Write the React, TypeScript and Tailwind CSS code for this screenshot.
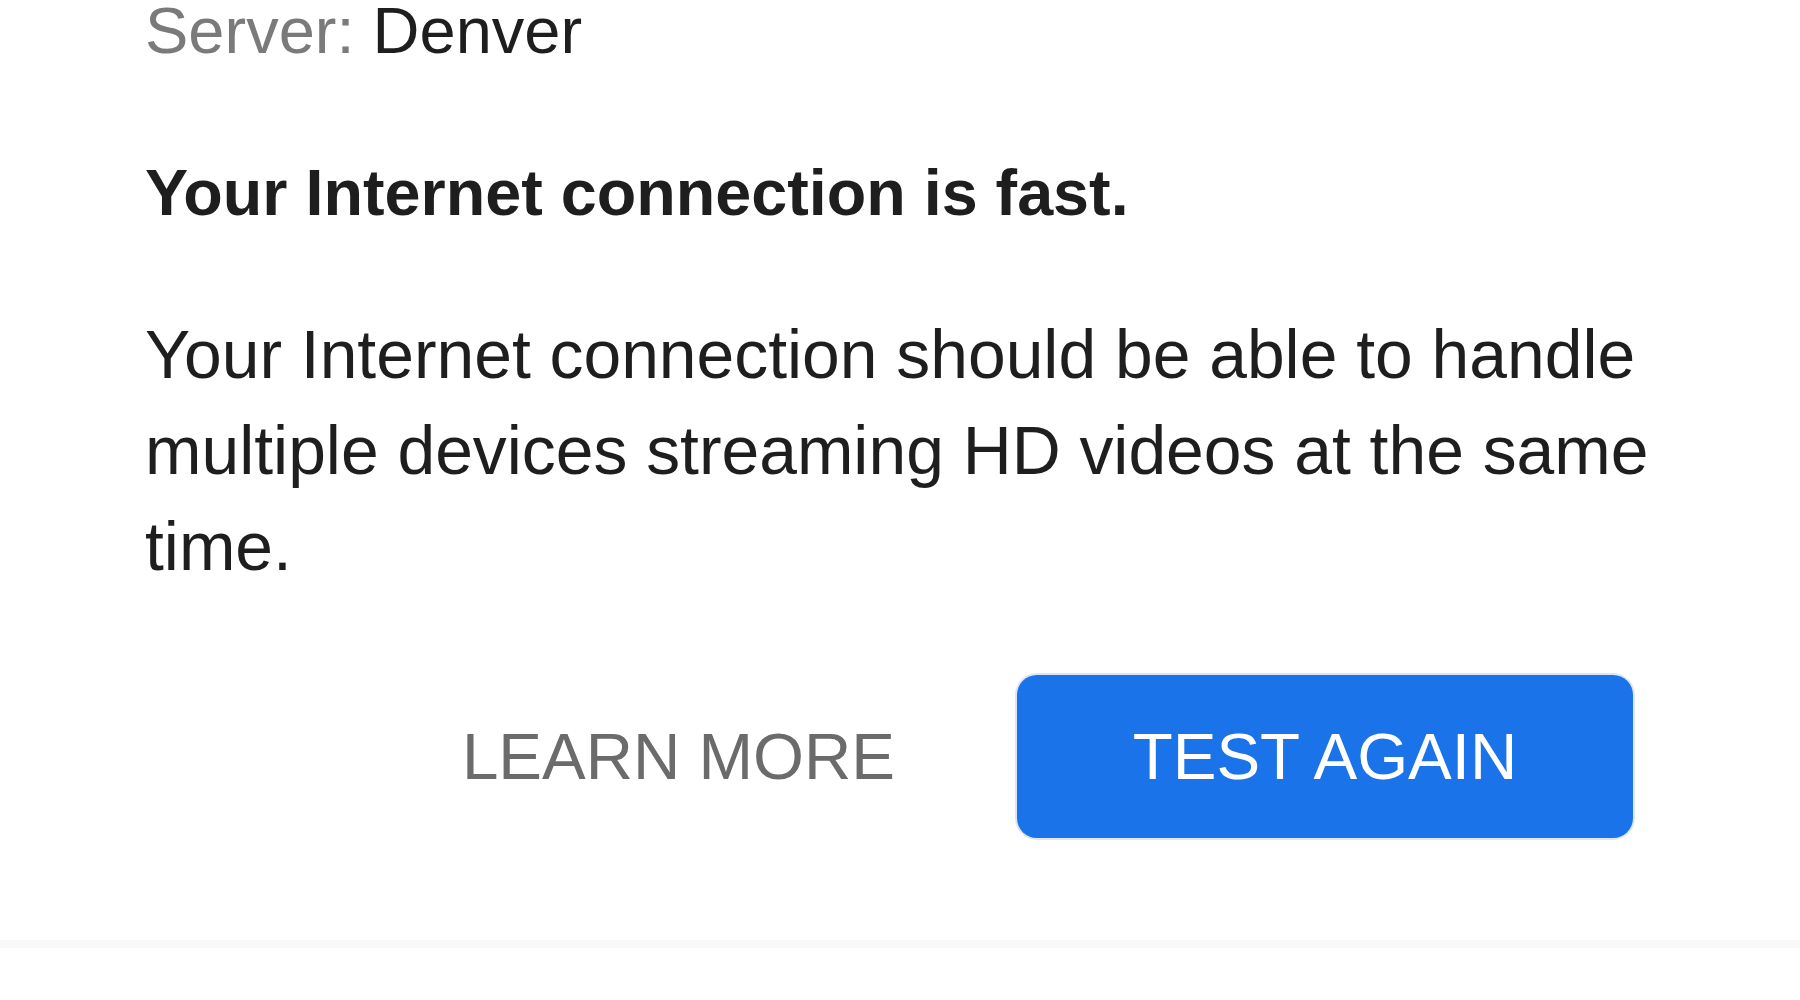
import React from "react";

export default function App() {
  return (
    <div
      className="w-[1800px] h-[1000px] bg-white overflow-hidden flex flex-col"
      style={{ fontFamily: '"Liberation Sans", Arial, Helvetica, sans-serif' }}
    >
      <div className="px-[145px] flex flex-col">
        <div className="text-[65px] leading-[62px] whitespace-nowrap">
          <span className="text-[#7a7a7a] font-light">Server:</span>{" "}
          <span className="text-[#1e1e1e]">Denver</span>
        </div>
        <h1 className="mt-[99px] text-[64.7px] leading-[64px] font-bold text-[#1e1e1e]">
          Your Internet connection is fast.
        </h1>
        <p className="mt-[82px] text-[67.8px] leading-[96px] text-[#1e1e1e]">
          Your Internet connection should be able to handle multiple devices streaming HD videos at the same time.
        </p>
        <div className="mt-[80px] flex items-center justify-end gap-[122px] pr-[22px]">
          <button className="text-[65.5px] leading-none text-[#6b6b6b] whitespace-nowrap bg-transparent">
            LEARN MORE
          </button>
          <button className="w-[616px] h-[163px] rounded-[20px] bg-[#1a73e8] text-white text-[65.5px] leading-none whitespace-nowrap flex items-center justify-center shadow-[0_0_0_2px_#dfe6f2]">
            TEST AGAIN
          </button>
        </div>
      </div>
      <div className="mt-[102px] h-[8px] w-full bg-[#f9f9f9]" />
      <div className="flex-1 bg-white" />
    </div>
  );
}
